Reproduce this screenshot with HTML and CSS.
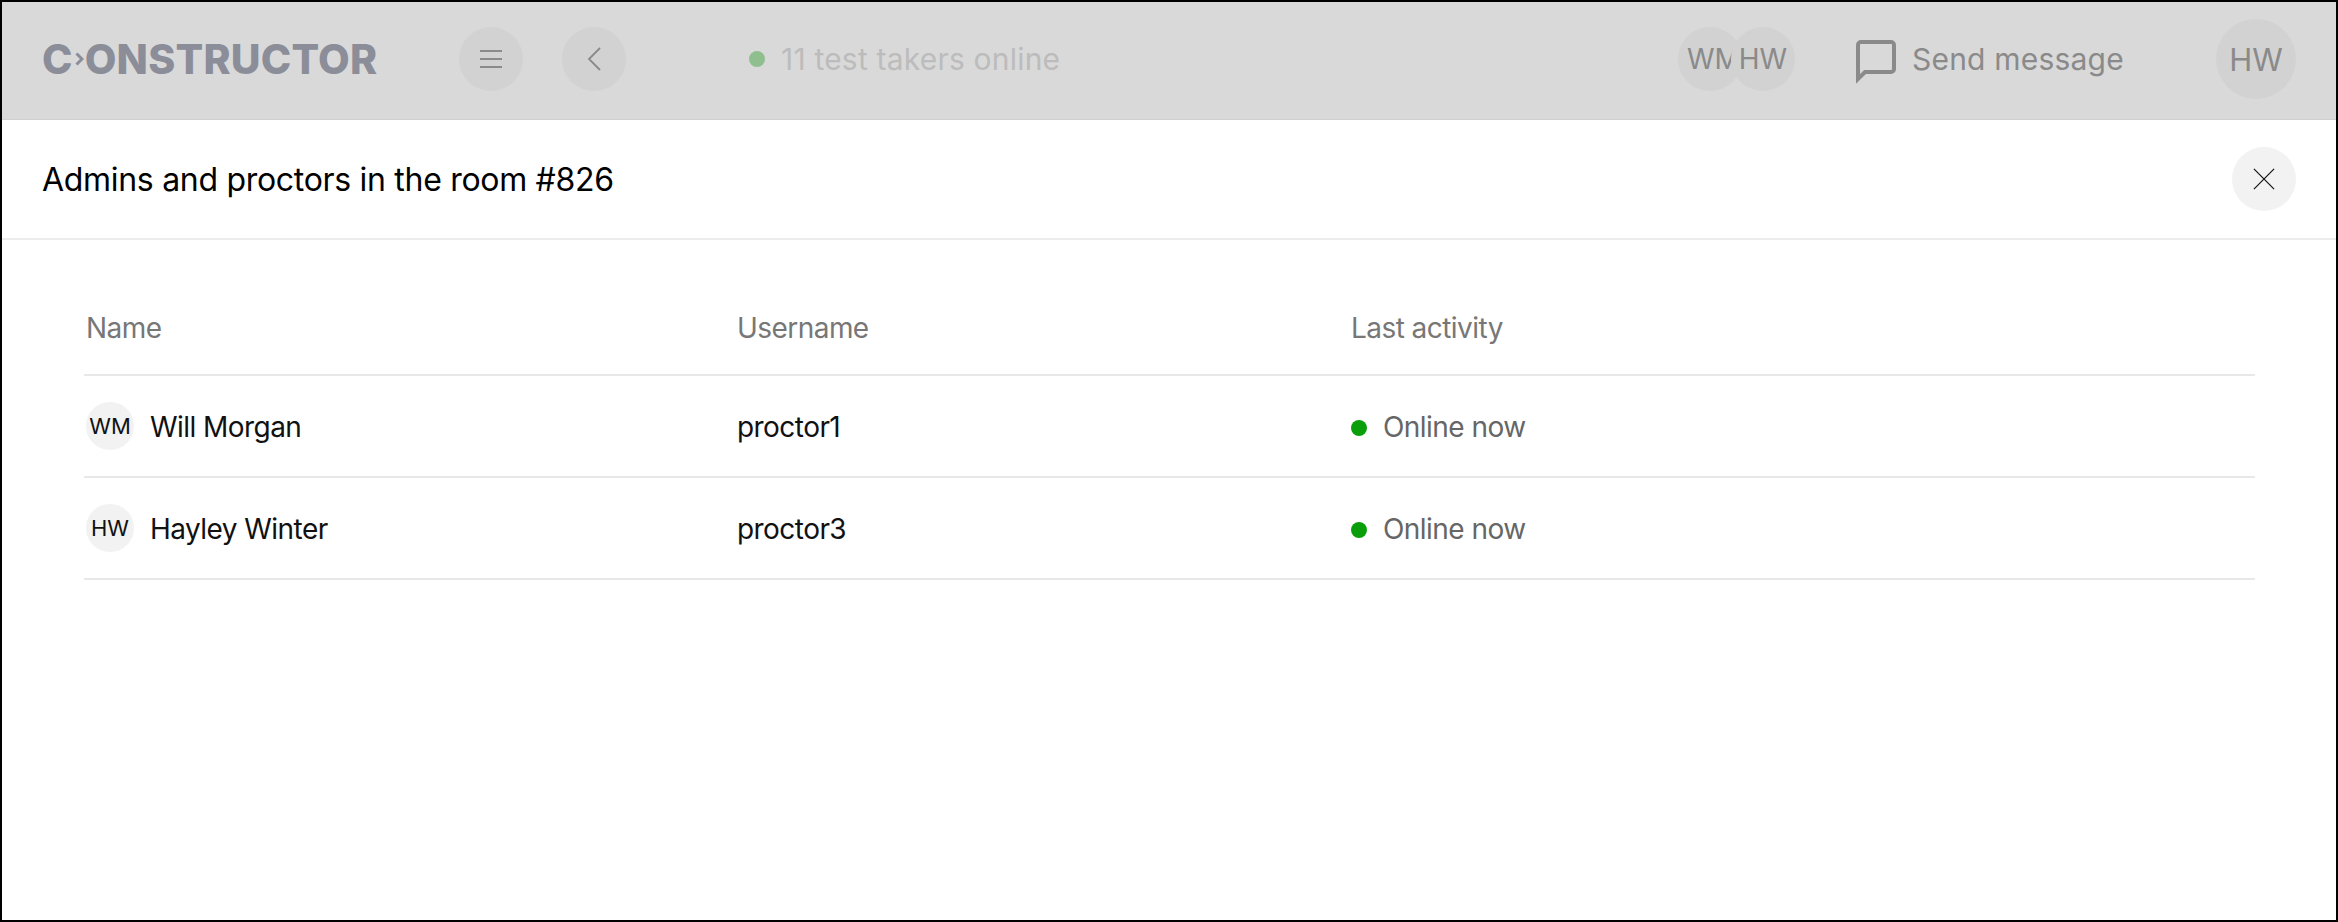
FILE: index.html
```html
<!DOCTYPE html>
<html lang="en">
<head>
<meta charset="utf-8">
<title>Admins and proctors</title>
<link rel="stylesheet" href="styles.css">
</head>
<body>
<div class="shell">
  <header class="topbar">
    <div class="logo">C<svg class="logo-chevron" viewBox="0 0 9 14"><path d="M1.5 1.5 7 7l-5.500 5.500" fill="none" stroke="currentColor" stroke-width="3"/></svg>ONSTRUCTOR</div>
    <div class="circle-btn menu-btn">
      <svg class="icon-menu" viewBox="0 0 22 18"><path d="M0 1h22M0 9h22M0 17h22" fill="none" stroke="currentColor" stroke-width="2"/></svg>
    </div>
    <div class="circle-btn back-btn">
      <svg class="icon-back" viewBox="0 0 14 24"><path d="M13 1 2 12l11 11" fill="none" stroke="currentColor" stroke-width="1.8"/></svg>
    </div>
    <div class="online"><span class="dot dot-faded"></span><span>11 test takers online</span></div>
    <div class="stack">
      <div class="circle-btn stack-a"><span class="clip">WM</span></div>
      <div class="circle-btn stack-b">HW</div>
    </div>
    <div class="send">
      <svg class="icon-chat" viewBox="0 0 40 44"><path d="M2 39V5a3 3 0 0 1 3-3h30a3 3 0 0 1 3 3v24a3 3 0 0 1-3 3H9z" fill="none" stroke="currentColor" stroke-width="4"/></svg>
      <span class="send-label">Send message</span>
    </div>
    <div class="me">HW</div>
  </header>

  <div class="titlebar">
    <h1 class="title">Admins and proctors in the room #826</h1>
    <div class="close">
      <svg class="icon-close" viewBox="0 0 24 24"><path d="M1 1l22 22M23 1 1 23" fill="none" stroke="#111" stroke-width="1.3"/></svg>
    </div>
  </div>

  <main class="content">
    <div class="row row-head">
      <div>Name</div><div>Username</div><div>Last activity</div>
    </div>
    <div class="row">
      <div class="person"><span class="avatar">WM</span><span>Will Morgan</span></div>
      <div>proctor1</div>
      <div class="status"><span class="dot dot-low"></span><span>Online now</span></div>
    </div>
    <div class="row">
      <div class="person"><span class="avatar">HW</span><span>Hayley Winter</span></div>
      <div>proctor3</div>
      <div class="status"><span class="dot dot-low"></span><span>Online now</span></div>
    </div>
  </main>
</div>
</body>
</html>
```
FILE: styles.css
```css
* { box-sizing: border-box; }
html, body { margin: 0; height: 100%; }
body { font-family: Inter, "Noto Sans", sans-serif; color: #111; background: #fff; }
.shell { height: 922px; border: 2px solid #000; display: flex; flex-direction: column; overflow: hidden; }

.topbar { height: 118px; flex: none; background: #d9d9d9; border-bottom: 1px solid #d0d0d0; display: flex; align-items: center; padding: 0 40px 3px; }
.logo { display: flex; align-items: center; width: 417px; font-size: 41px; font-weight: 800; letter-spacing: 0.2px; color: #8b8d99; }
.logo-chevron { width: 9px; height: 14px; margin: 0 1px 0 2px; }
.circle-btn { width: 64px; height: 64px; border-radius: 50%; background: #d2d2d2; color: #8a8a8a; display: flex; align-items: center; justify-content: center; flex: none; }
.icon-menu { width: 22px; height: 18px; }
.icon-close { width: 22px; height: 22px; }
.back-btn { margin-left: 39px; }
.icon-back { width: 14px; height: 24px; }
.online { display: flex; align-items: center; gap: 16px; margin-left: 123px; font-size: 30px; letter-spacing: 0.2px; color: #bcbcbc; width: 929px; }
.dot { width: 16px; height: 16px; border-radius: 50%; background: #0a9f0a; flex: none; }
.dot-faded { background: #8fbf8f; }
.dot-low { margin-top: 3px; }
.stack { display: flex; width: 178px; font-size: 28px; }
.stack-a { overflow: hidden; justify-content: flex-start; }
.clip { display: block; width: 52px; margin-left: 9px; overflow: hidden; }
.stack-b { margin-left: -11px; position: relative; }
.send { display: flex; align-items: center; gap: 16px; font-size: 30px; color: #8a8a8a; width: 360px; }
.send-label { letter-spacing: 0.2px; }
.icon-chat { width: 40px; height: 44px; flex: none; margin-top: 5px; }
.me { width: 80px; height: 80px; border-radius: 50%; background: #d2d2d2; color: #8a8a8a; font-size: 31px; display: flex; align-items: center; justify-content: center; flex: none; }

.titlebar { height: 120px; flex: none; border-bottom: 2px solid #ececec; display: flex; align-items: center; justify-content: space-between; padding: 0 40px; }
.title { margin: 0; font-size: 32px; font-weight: 400; letter-spacing: -0.3px; color: #000; }
.close { width: 64px; height: 64px; border-radius: 50%; background: #f2f2f2; display: flex; align-items: center; justify-content: center; }

.content { padding: 0 81px 0 82px; font-size: 28px; letter-spacing: -0.55px; }
.row { display: grid; grid-template-columns: 651px 614px 1fr; align-items: center; height: 102px; padding: 1px 0 0 2px; border-bottom: 2px solid #e8e8e8; color: #111; }
.row-head { height: 136px; padding-top: 42px; color: #777; }
.person { display: flex; align-items: center; gap: 16px; }
.avatar { width: 48px; height: 48px; border-radius: 50%; background: #f2f2f2; font-size: 22px; letter-spacing: 0; display: flex; align-items: center; justify-content: center; flex: none; margin-top: -1px; }
.status { display: flex; align-items: center; gap: 16px; color: #666; }
```
